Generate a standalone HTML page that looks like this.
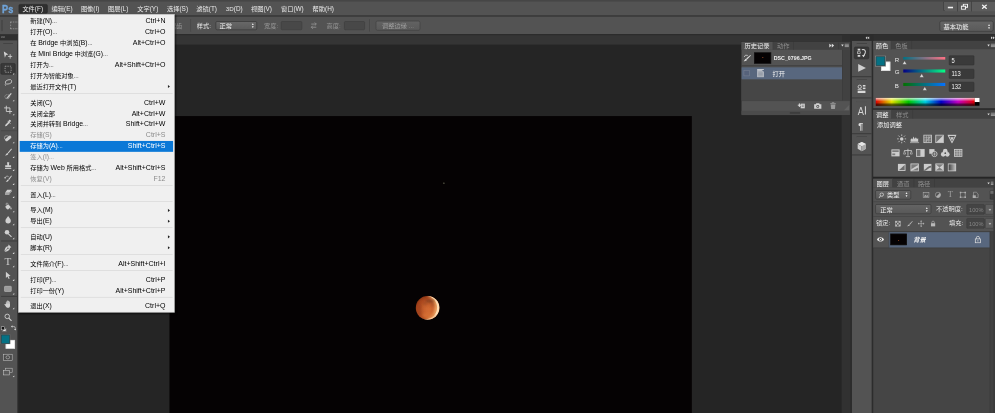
<!DOCTYPE html>
<html lang="zh-CN">
<head>
<meta charset="utf-8">
<title>Photoshop</title>
<style>
html,body{margin:0;padding:0;background:#262626;overflow:hidden}
body{width:995px;height:413px;position:relative}
#app{position:absolute;left:0;top:0;width:1920px;height:797px;transform:scale(0.51823);transform-origin:0 0;
 font-family:"Liberation Sans","Noto Sans CJK SC",sans-serif;font-size:12px;line-height:1;color:#e4e4e4;background:#252525;overflow:hidden}
#app div,#app span,#app svg{position:absolute;box-sizing:border-box;white-space:nowrap}
/* top bars */
#menubar{left:0;top:0;width:1920px;height:30px;background:#535353}
#mbline{left:0;top:30.500px;width:1920px;height:1.800px;background:#3a3a3a}
#topedge{left:0;top:0;width:1920px;height:2.600px;background:#464646}
#optbar{left:0;top:32.300px;width:1920px;height:33.5px;background:#535353}
#tabband{left:0;top:65.5px;width:1920px;height:20.5px;background:#353535;border-top:2px solid #2b2b2b}
.mi{top:12px;font-size:12px;color:#e9e9e9}
.mi small{font-size:12.4px;position:static}
.en{position:static!important;font-size:13.4px}
/* popup menu */
#menu{left:35.3px;top:27.2px;width:302px;height:576px;background:#f0f0f0;border:1px solid #9a9a9a;box-shadow:2px 2px 3px rgba(0,0,0,.55)}
#menu .it{left:2px;width:296px;height:21px;color:#000;font-size:12px}
#menu .it span{top:2.500px;line-height:16px}
#menu .it .l{left:20px}
#menu .it .r{right:15px;font-size:13.5px;top:2.500px}
#menu .it .a{right:6.5px;top:7px;line-height:0;width:0;height:0;border-left:4px solid #222;border-top:3.5px solid transparent;border-bottom:3.5px solid transparent}
#menu .dis{color:#8c8c8c}
#menu .hl{background:#0a78d7;color:#fff}
#menu .sep{left:4px;width:293px;height:1px;background:#cfcfcf}
/* panels */
.panel{background:#535353}
.tabbar{background:#424242;height:17px}
.tab{height:17px;top:0;font-size:12px;padding-top:3px;text-align:center;color:#8f8f8f;border-right:1px solid #383838}
.tab.on{background:#535353;color:#f0f0f0}
.hdr{background:#2f2f2f}
</style>
</head>
<body>
<div id="app">

<!-- workspace + document -->
<div id="doc" style="left:326.5px;top:223.8px;width:1008.5px;height:574px;background:#050203"></div>
<div style="left:854.5px;top:352.0px;width:3px;height:3px;border-radius:50%;background:#4a4a3c;box-shadow:0 0 1.500px #33332a"></div>
<svg id="moon" style="left:794.800px;top:564.100px" width="60" height="60" viewBox="-30 -30 60 60">
<defs>
<radialGradient id="mg" cx="0.55" cy="0.6" r="0.62"><stop offset="0" stop-color="#d46c32"/><stop offset="0.5" stop-color="#c45e2c"/><stop offset="0.8" stop-color="#a8461e"/><stop offset="1" stop-color="#8c3514"/></radialGradient>
<filter id="mb0" x="-20%" y="-20%" width="140%" height="140%"><feGaussianBlur stdDeviation="1"/></filter>
<filter id="mb1" x="-50%" y="-50%" width="200%" height="200%"><feGaussianBlur stdDeviation="1.700"/></filter>
<filter id="mb2" x="-50%" y="-50%" width="200%" height="200%"><feGaussianBlur stdDeviation="2.500"/></filter>
<clipPath id="mc"><circle r="23.200"/></clipPath>
<mask id="mm1"><rect x="-30" y="-30" width="60" height="60" fill="#000"/><circle r="23" fill="#fff"/><circle cx="-4.200" cy="-0.500" r="22.600" fill="#000"/></mask>
<mask id="mm2"><rect x="-30" y="-30" width="60" height="60" fill="#000"/><circle r="23" fill="#fff"/><circle cx="-10" cy="-1" r="23.500" fill="#000"/></mask>
</defs>
<circle r="22.700" fill="url(#mg)" filter="url(#mb0)"/>
<g clip-path="url(#mc)">
<g filter="url(#mb2)" opacity=".9"><rect x="-30" y="-30" width="60" height="60" fill="#f0a464" mask="url(#mm2)"/></g>
<g filter="url(#mb0)" opacity=".95"><rect x="-30" y="-30" width="60" height="60" fill="#ffe4bc" mask="url(#mm1)"/></g>
<ellipse cx="3" cy="15" rx="12" ry="6" fill="#e07c3a" opacity=".5" filter="url(#mb2)"/>
<ellipse cx="5" cy="-13" rx="9" ry="3.500" fill="#6e3a22" opacity=".55" filter="url(#mb1)"/>
<ellipse cx="10" cy="-6" rx="4.500" ry="3" fill="#8a4a2a" opacity=".4" filter="url(#mb1)"/>
<ellipse cx="-5" cy="-8" rx="5" ry="3.500" fill="#8a4020" opacity=".4" filter="url(#mb2)"/>
<ellipse cx="-15" cy="4" rx="5" ry="12" fill="#8c3614" opacity=".4" filter="url(#mb2)"/>
</g>
</svg>

<!-- top bars -->
<div id="menubar"></div>
<div id="mbline"></div>
<div id="topedge"></div>
<div id="optbar"></div>
<div id="tabband"></div>

<!--MENUBAR-->
<div style="left:2px;top:1px;width:34px;height:28px;color:#6fa4da;font-size:21px;font-weight:bold"><span style="left:1.500px;top:6.500px;transform:scaleX(.84);transform-origin:0 0;-webkit-text-stroke:0.700px #6fa4da">Ps</span></div>
<div style="left:35.7px;top:7.7px;width:56.0px;height:18.7px;background:#2f2f2f;border:1px solid #262626;border-radius:3px"></div>
<span class="mi" style="left:43.2px">文件<small>(F)</small></span>
<span class="mi" style="left:99.6px">编辑<small>(E)</small></span>
<span class="mi" style="left:156.1px">图像<small>(I)</small></span>
<span class="mi" style="left:208.4px">图层<small>(L)</small></span>
<span class="mi" style="left:264.9px">文字<small>(Y)</small></span>
<span class="mi" style="left:322.3px">选择<small>(S)</small></span>
<span class="mi" style="left:378.8px">滤镜<small>(T)</small></span>
<span class="mi" style="left:435.7px">3D<small>(D)</small></span>
<span class="mi" style="left:484.3px">视图<small>(V)</small></span>
<span class="mi" style="left:542.2px">窗口<small>(W)</small></span>
<span class="mi" style="left:603.2px">帮助<small>(H)</small></span>
<div style="left:1819.7px;top:2.7px;width:100.3px;height:19.7px;background:#5c5c5c;border:1px solid #303030;border-right:none;border-radius:0 0 0 4px"></div>
<div style="left:1847.1px;top:2.7px;width:1px;height:19.7px;background:#303030"></div>
<div style="left:1874.1px;top:2.7px;width:1px;height:19.7px;background:#303030"></div>
<div style="left:1828.9px;top:12.7px;width:10.0px;height:3.5px;background:#f2f2f2"></div>
<svg style="left:1853.6px;top:6.6px" width="14" height="12" viewBox="0 0 14 12"><rect x="5" y="1" width="8" height="6" fill="none" stroke="#f2f2f2" stroke-width="2"/><rect x="1" y="5" width="8" height="6" fill="#5c5c5c" stroke="#f2f2f2" stroke-width="2"/></svg>
<svg style="left:1893.6px;top:8.1px" width="11" height="10" viewBox="0 0 11 10"><path d="M1 1L10 9M10 1L1 9" stroke="#f2f2f2" stroke-width="2.4"/></svg>
<!--OPTBAR-->
<div style="left:2px;top:38.6px;width:3px;height:21.2px;border-left:1px dotted #2e2e2e;border-right:1px dotted #2e2e2e"></div>
<div style="left:19.7px;top:42.3px;width:17px;height:14px;border:1.5px dashed #bdbdbd"></div>
<span style="left:303.6px;top:43.6px;color:#979797">消除锯齿</span>
<div style="left:367.2px;top:36.7px;width:2px;height:24.1px;background:#3d3d3d;border-right:1px solid #636363"></div>
<span style="left:379.8px;top:43.6px;color:#ededed">样式:</span>
<div style="left:415.8px;top:40.7px;width:79.9px;height:17.8px;background:linear-gradient(#686868,#5a5a5a);border:1px solid #2f2f2f;border-radius:3px"><span style="left:7px;top:2.5px;color:#f2f2f2">正常</span><span style="right:4px;top:3px;font-size:6px;line-height:5.5px;color:#eee;position:absolute">▲<br>▼</span></div>
<span style="left:509.4px;top:43.6px;color:#979797">宽度:</span>
<div style="left:542.2px;top:40.7px;width:40.5px;height:17.8px;background:#484848;border:1px solid #3b3b3b;border-radius:2.500px"></div>
<svg style="left:596.6px;top:41.3px" width="17" height="17" viewBox="0 0 14 14"><path d="M3 4.500h8M8.500 2l2.500 2.500L8.500 7M11 9.500H3M5.500 7L3 9.500 5.500 12" stroke="#8e8e8e" stroke-width="1.500" fill="none"/></svg>
<span style="left:630.0px;top:43.6px;color:#979797">高度:</span>
<div style="left:663.8px;top:40.7px;width:40.5px;height:17.8px;background:#484848;border:1px solid #3b3b3b;border-radius:2.500px"></div>
<div style="left:713.4px;top:36.7px;width:2px;height:24.1px;background:#3d3d3d;border-right:1px solid #636363"></div>
<div style="left:724.8px;top:39.8px;width:86.4px;height:19.3px;background:linear-gradient(#626262,#595959);border:1px solid #3d3d3d;border-radius:3.500px;text-align:center"><span style="left:0;width:100%;top:3px;color:#9e9e9e">调整边缘 ...</span></div>
<div style="left:1812.7px;top:39.9px;width:104.8px;height:21.0px;background:linear-gradient(#666,#5a5a5a);border:1px solid #333;border-radius:4px"><span style="left:7px;top:4px;color:#f4f4f4">基本功能</span><span style="right:5px;top:4.5px;font-size:6px;line-height:6px;color:#eee;position:absolute">▲<br>▼</span></div>
<!--TOOLBAR-->
<div id="toolbar" class="panel" style="left:0;top:66.0px;width:34.3px;height:740px"></div>
<div style="left:34.3px;top:66.0px;width:1.3px;height:740px;background:#2b2b2b"></div>
<div class="hdr" style="left:0;top:66.0px;width:34.3px;height:12.0px"></div>
<svg style="left:1px;top:69.1px" width="9" height="6" viewBox="0 0 9 6"><path d="M1 1l3 3M4 1L1 4M5 1l3 3M8 1L5 4" stroke="#9a9a9a" stroke-width="1"/></svg>
<div style="left:5.8px;top:83.0px;width:19.3px;height:3px;background:#444;border-bottom:1px solid #5e5e5e"></div>
<div style="left:1.4px;top:122.1px;width:28.9px;height:22.4px;background:#383838;border:1px solid #2a2a2a;border-radius:3px"></div>
<div style="left:2px;top:251.8px;width:30.5px;height:1.5px;background:#3f3f3f"></div>
<div style="left:2px;top:464.4px;width:30.5px;height:1.5px;background:#3f3f3f"></div>
<div style="left:2px;top:571.1px;width:30.5px;height:1.5px;background:#3f3f3f"></div>
<svg style="left:6.7px;top:98.0px" width="17.400" height="17.400" viewBox="0 0 20 20"><path d="M0 1l10.500 7.500-5.200 1L2.800 15.500z" fill="#d0d0d0"/><path d="M14.500 7.500v10M9.500 12.500h10" stroke="#d0d0d0" stroke-width="1.900"/></svg>
<svg style="left:6.7px;top:124.6px" width="17.400" height="17.400" viewBox="0 0 20 20"><rect x="3.200" y="3.200" width="13.400" height="13.400" fill="none" stroke="#c8c8c8" stroke-width="1.400" stroke-dasharray="2.900 2.350"/></svg><svg style="left:24.3px;top:140.3px" width="4" height="4" viewBox="0 0 4 4"><path d="M4 0v4H0z" fill="#e0e0e0"/></svg>
<svg style="left:6.7px;top:151.3px" width="17.400" height="17.400" viewBox="0 0 20 20"><ellipse cx="11" cy="8" rx="7.5" ry="4.6" fill="none" stroke="#d0d0d0" stroke-width="1.7" transform="rotate(-18 11 8)"/><path d="M5 11c-2 2-2 4 0 6" stroke="#d0d0d0" stroke-width="1.5" fill="none"/></svg><svg style="left:24.3px;top:166.9px" width="4" height="4" viewBox="0 0 4 4"><path d="M4 0v4H0z" fill="#e0e0e0"/></svg>
<svg style="left:6.7px;top:176.5px" width="17.400" height="17.400" viewBox="0 0 20 20"><ellipse cx="8" cy="11" rx="5.5" ry="4.5" fill="none" stroke="#d0d0d0" stroke-width="1.3" stroke-dasharray="2 1.5"/><path d="M7 13L16 3l2 1.6L9.5 14.5z" fill="#d0d0d0"/><path d="M5.5 15.5l2-3 2 2z" fill="#d0d0d0"/></svg><svg style="left:24.3px;top:192.2px" width="4" height="4" viewBox="0 0 4 4"><path d="M4 0v4H0z" fill="#e0e0e0"/></svg>
<svg style="left:6.7px;top:203.2px" width="17.400" height="17.400" viewBox="0 0 20 20"><path d="M6 1v13h13M1 6h13v13" stroke="#d0d0d0" stroke-width="2" fill="none"/></svg><svg style="left:24.3px;top:218.8px" width="4" height="4" viewBox="0 0 4 4"><path d="M4 0v4H0z" fill="#e0e0e0"/></svg>
<svg style="left:6.7px;top:228.5px" width="17.400" height="17.400" viewBox="0 0 20 20"><path d="M3 17l1-3.5 7-7 2.5 2.5-7 7z" fill="#d0d0d0"/><path d="M10.5 5l2-2c1.6-1.6 4.8 1.6 3.2 3.2l-2 2z" fill="#d0d0d0"/><path d="M9 5l6 6" stroke="#d0d0d0" stroke-width="2"/></svg><svg style="left:24.3px;top:244.1px" width="4" height="4" viewBox="0 0 4 4"><path d="M4 0v4H0z" fill="#e0e0e0"/></svg>
<svg style="left:6.7px;top:257.8px" width="17.400" height="17.400" viewBox="0 0 20 20"><ellipse cx="7" cy="9" rx="5.5" ry="4.5" fill="none" stroke="#d0d0d0" stroke-width="1.2"/><rect x="2.5" y="7.5" width="16" height="6.5" rx="3.2" fill="#d0d0d0" transform="rotate(-40 10 11)"/></svg><svg style="left:24.3px;top:273.4px" width="4" height="4" viewBox="0 0 4 4"><path d="M4 0v4H0z" fill="#e0e0e0"/></svg>
<svg style="left:6.7px;top:285.4px" width="17.400" height="17.400" viewBox="0 0 20 20"><path d="M9 11L17 2l1.4 1.2L11 12.5z" fill="#d0d0d0"/><path d="M8.5 11.5l2.2 2.2c-1.5 3-5 3.8-8 3.3 2.6-1 2.6-4.2 5.8-5.5z" fill="#d0d0d0"/></svg><svg style="left:24.3px;top:301.0px" width="4" height="4" viewBox="0 0 4 4"><path d="M4 0v4H0z" fill="#e0e0e0"/></svg>
<svg style="left:6.7px;top:310.5px" width="17.400" height="17.400" viewBox="0 0 20 20"><path d="M7.5 2.5h5l-.8 6.5h4.8v4.5h-13V9h4.8z" fill="#d0d0d0"/><rect x="3" y="15" width="14" height="2.2" fill="#d0d0d0"/></svg><svg style="left:24.3px;top:326.1px" width="4" height="4" viewBox="0 0 4 4"><path d="M4 0v4H0z" fill="#e0e0e0"/></svg>
<svg style="left:6.7px;top:337.1px" width="17.400" height="17.400" viewBox="0 0 20 20"><path d="M10 10l7-8 1.4 1.2L12 12z" fill="#d0d0d0"/><path d="M9.5 11l2 2c-1.3 2.6-4.4 3.3-7 2.9 2.3-.9 2.3-3.7 5-4.9z" fill="#d0d0d0"/><path d="M3 8a5 5 0 0 1 8-3.5" stroke="#d0d0d0" stroke-width="1.5" fill="none"/><path d="M1 6l2.2 3.2L6 6.5z" fill="#d0d0d0"/></svg><svg style="left:24.3px;top:352.7px" width="4" height="4" viewBox="0 0 4 4"><path d="M4 0v4H0z" fill="#e0e0e0"/></svg>
<svg style="left:6.7px;top:362.4px" width="17.400" height="17.400" viewBox="0 0 20 20"><path d="M8 4.5h10l-5 7H3z" fill="#d0d0d0"/><path d="M3 12.5h10v3.5H3z" fill="#bdbdbd"/><path d="M13 11.5l5-7v3.5l-5 7z" fill="#a9a9a9"/></svg><svg style="left:24.3px;top:378.0px" width="4" height="4" viewBox="0 0 4 4"><path d="M4 0v4H0z" fill="#e0e0e0"/></svg>
<svg style="left:6.7px;top:390.0px" width="17.400" height="17.400" viewBox="0 0 20 20"><path d="M4 9l6-4.5 6 6.5-6 5.5c-3.5-1-6-4-6-7.500z" fill="#d0d0d0"/><path d="M10 4.500c-1.500-4-5.500-3-4 2" stroke="#d0d0d0" stroke-width="1.4" fill="none"/><path d="M16 11c1.200 1.800 2.500 3.500 1.200 5-1.200 1-2.600 0-2.200-1.600z" fill="#d0d0d0"/></svg><svg style="left:24.3px;top:405.6px" width="4" height="4" viewBox="0 0 4 4"><path d="M4 0v4H0z" fill="#e0e0e0"/></svg>
<svg style="left:6.7px;top:415.2px" width="17.400" height="17.400" viewBox="0 0 20 20"><path d="M10 2c2.500 4 6 7 6 10.500a6 6 0 0 1-12 0C4 9 7.500 6 10 2z" fill="#d0d0d0"/></svg><svg style="left:24.3px;top:430.9px" width="4" height="4" viewBox="0 0 4 4"><path d="M4 0v4H0z" fill="#e0e0e0"/></svg>
<svg style="left:6.7px;top:441.9px" width="17.400" height="17.400" viewBox="0 0 20 20"><circle cx="7.500" cy="7" r="5" fill="#d0d0d0"/><path d="M10.500 10.500l7 7" stroke="#d0d0d0" stroke-width="2.400"/></svg><svg style="left:24.3px;top:457.5px" width="4" height="4" viewBox="0 0 4 4"><path d="M4 0v4H0z" fill="#e0e0e0"/></svg>
<svg style="left:6.7px;top:469.9px" width="17.400" height="17.400" viewBox="0 0 20 20"><path d="M11 2l6 6-3 2c0 3.500-2 6-9 8l-2.500-.5L2 15c2-7 4.500-9 8-9z" fill="#d0d0d0"/><circle cx="9.500" cy="10.500" r="1.600" fill="#535353"/><path d="M3 17l6-6" stroke="#535353" stroke-width="1"/></svg><svg style="left:24.3px;top:485.5px" width="4" height="4" viewBox="0 0 4 4"><path d="M4 0v4H0z" fill="#e0e0e0"/></svg>
<span style="left:7.4px;top:493.3px;width:16px;text-align:center;font-family:'Liberation Serif',serif;font-size:21.500px;margin-top:1px;color:#cacaca">T</span><svg style="left:24.3px;top:511.7px" width="4" height="4" viewBox="0 0 4 4"><path d="M4 0v4H0z" fill="#e0e0e0"/></svg>
<svg style="left:6.7px;top:522.7px" width="17.400" height="17.400" viewBox="0 0 20 20"><path d="M5 1.500v14l3.600-3.400 2.600 5.700 2.200-1-2.600-5.500 4.800-.3z" fill="#d0d0d0"/></svg><svg style="left:24.3px;top:538.4px" width="4" height="4" viewBox="0 0 4 4"><path d="M4 0v4H0z" fill="#e0e0e0"/></svg>
<svg style="left:6.7px;top:549.4px" width="17.400" height="17.400" viewBox="0 0 20 20"><rect x="2" y="4" width="15" height="11.500" rx="1" fill="#9c9c9c" stroke="#c4c4c4" stroke-width="1.200"/></svg><svg style="left:24.3px;top:565.0px" width="4" height="4" viewBox="0 0 4 4"><path d="M4 0v4H0z" fill="#e0e0e0"/></svg>
<svg style="left:6.7px;top:577.5px" width="17.400" height="17.400" viewBox="0 0 20 20"><path d="M5 10V5.500c0-1.300 1.800-1.300 1.800 0V9h.6V3.300c0-1.300 1.900-1.300 1.900 0V9h.6V3.800c0-1.300 1.900-1.300 1.900 0V9.500h.6V5.500c0-1.300 1.800-1.300 1.800 0V13c0 3-1.500 5.500-4.500 5.500-3.200 0-4-1.500-5.500-4L2 11.500c-.8-1.300.8-2.300 1.700-1.200z" fill="#d0d0d0"/></svg><svg style="left:24.3px;top:593.2px" width="4" height="4" viewBox="0 0 4 4"><path d="M4 0v4H0z" fill="#e0e0e0"/></svg>
<svg style="left:6.7px;top:603.8px" width="17.400" height="17.400" viewBox="0 0 20 20"><circle cx="8" cy="7.500" r="5" fill="none" stroke="#d0d0d0" stroke-width="2"/><path d="M11.500 11.500l6 6" stroke="#d0d0d0" stroke-width="2.600"/></svg>
<div style="left:5.4px;top:632.9px;width:7px;height:7px;background:#fff;border:1px solid #222"></div><div style="left:1.9px;top:629.5px;width:7px;height:7px;background:#111;border:1px solid #ddd"></div>
<svg style="left:20.5px;top:626.8px" width="10" height="11" viewBox="0 0 10 11"><path d="M2 3h3.500a3 3 0 0 1 3 3v2" stroke="#d0d0d0" stroke-width="1.300" fill="none"/><path d="M0 3l3-2.600v5.200zM8.500 10.800L5.900 7.800h5.200z" fill="#d0d0d0"/></svg>
<div style="left:11.2px;top:656.1px;width:18.3px;height:17.4px;background:#fff;border:1px solid #c9c9c9"></div>
<div style="left:2.3px;top:645.7px;width:16.8px;height:17.4px;background:#057184;border:1px solid #3c3c3c;box-shadow:0 0 0 1px #6b6b6b"></div>
<div style="left:5.8px;top:683.1px;width:17.9px;height:12.7px;border:1.500px solid #cfcfcf;background:#4a4a4a"></div><div style="left:11.2px;top:685.6px;width:7.500px;height:7.500px;border-radius:50%;border:1.500px solid #d9d9d9"></div>
<div style="left:10.0px;top:710.1px;width:13.7px;height:9.3px;border:1.500px solid #c4c4c4;background:#535353"></div><div style="left:5.8px;top:714.0px;width:13.7px;height:9.6px;border:1.500px solid #d0d0d0;background:#5a5a5a"></div>
<svg style="left:24.3px;top:723.6px" width="4" height="4" viewBox="0 0 4 4"><path d="M4 0v4H0z" fill="#e0e0e0"/></svg>
<!--HISTORY-->
<div style="left:1624.4px;top:220.0px;width:17.2px;height:600px;background:#313131"></div>

<div id="hist" class="panel" style="left:1429.7px;top:81.1px;width:211.5px;height:140.8px;border:1px solid #2c2c2c;border-top:none">
<div class="tabbar" style="left:0;top:0;width:209.5px;height:14.8px"></div>
<div class="tab on" style="padding-top:1.900px;left:0;width:60.9px;height:14.8px">历史记录</div>
<div class="tab" style="padding-top:1.900px;left:60.9px;width:40.5px;height:14.8px">动作</div>
<svg style="left:169.8px;top:2.8px" width="10" height="8" viewBox="0 0 10 8"><path d="M0 0l4.500 4L0 8zM5 0l4.500 4L5 8z" fill="#dcdcdc"/></svg>
<div style="left:186.9px;top:0.6px;width:1px;height:12.9px;background:#383838"></div>
<svg style="left:192.1px;top:2.8px" width="16" height="8" viewBox="0 0 16 8"><path d="M0 2h5L2.500 5.500z" fill="#dcdcdc"/><path d="M7 1h8M7 3.500h8M7 6h8" stroke="#cfcfcf" stroke-width="1.200"/></svg>
<div style="left:0;top:71.7px;width:194.6px;height:41.1px;background:#464646"></div>
<div style="left:0;top:45.3px;width:194.6px;height:1.500px;background:#3d3d3d"></div>
<svg style="left:3.4px;top:23.1px" width="16" height="16" viewBox="0 0 16 16"><path d="M6 9l8-7 1 1.200L7.500 11z" fill="#e0e0e0"/><path d="M5.500 9.500l2 2c-1 2.500-4 3-6.500 2.500 2-.8 2-3.400 4.500-4.500z" fill="#e0e0e0"/><path d="M2 6a5 5 0 0 1 7-3" stroke="#e0e0e0" stroke-width="1.400" fill="none"/></svg>
<div style="left:24.6px;top:20.4px;width:32.8px;height:21.8px;background:#050203;border:1px solid #222"><div style="left:14.500px;top:7.6px;width:2px;height:2px;background:#b4542a;border-radius:50%"></div></div>
<span style="left:62.8px;top:24.5px;font-weight:bold;font-size:12px;color:#f0f0f0;transform:scaleX(.85);transform-origin:0 0">DSC_0796.JPG</span>
<div style="left:0;top:48.8px;width:194.6px;height:22.9px;background:#58677e"></div>
<div style="left:4.6px;top:54.0px;width:12.0px;height:12.0px;border:1px solid #7d8796;background:#56627a"></div>
<svg style="left:29.7px;top:52.0px" width="15" height="17" viewBox="0 0 15 17"><path d="M1 2h9l4 3.500V16H1z" fill="#b9bec6"/><path d="M3 6h9M3 8.500h9M3 11h9M3 13.500h9" stroke="#6d7786" stroke-width="1"/><path d="M1 1h13" stroke="#e6e6e6" stroke-width="1.500"/></svg>
<span style="left:59.8px;top:54.7px;color:#f4f4f4">打开</span>
<div style="left:194.6px;top:14.8px;width:14.9px;height:98.6px;background:#414141;border-left:1px solid #383838"></div>
<div style="left:0;top:112.8px;width:209.5px;height:1.500px;background:#3d3d3d"></div>
<svg style="left:108.2px;top:116.3px" width="16" height="14" viewBox="0 0 16 14"><rect x="6" y="3" width="8" height="9" fill="#d0d0d0"/><path d="M0 6h7M3.500 2.500v7" stroke="#e6e6e6" stroke-width="1.800"/><path d="M8 6h4M8 8.500h4" stroke="#535353" stroke-width="1"/></svg>
<svg style="left:139.1px;top:116.9px" width="16" height="13" viewBox="0 0 16 13"><path d="M1 3h3l1.200-2h5.600L12 3h3v9H1z" fill="#d0d0d0"/><circle cx="8" cy="7.500" r="2.800" fill="#535353"/><circle cx="8" cy="7.500" r="1.300" fill="#d0d0d0"/></svg>
<svg style="left:169.9px;top:116.3px" width="13" height="14" viewBox="0 0 13 14"><path d="M1 3h11M4.500 3V1.200h4V3" stroke="#9a9a9a" stroke-width="1.500" fill="none"/><path d="M2 4.500h9l-.8 9H2.800z" fill="#9a9a9a"/></svg>
<svg style="left:197.5px;top:121.1px" width="11" height="11" viewBox="0 0 11 11"><path d="M11 0v11H0z" fill="#626262"/></svg>
<div style="left:0;top:133.1px;width:209.5px;height:7.7px;background:#4b4b4b;border-top:-0.4px solid #3a3a3a"></div>
<div style="left:93.7px;top:136.0px;width:19.3px;height:2px;background:#333"></div>
</div>
<!--STRIP-->
<div style="left:1625.3px;top:66.0px;width:294.7px;height:13.7px;background:#2f2f2f"></div>
<div style="left:1641.2px;top:66.0px;width:43.4px;height:740px;background:#2c2c2c"></div>
<div class="panel" style="left:1643.9px;top:78.7px;width:38.0px;height:740px"></div>
<svg style="left:1669.7px;top:69.9px" width="8" height="6" viewBox="0 0 8 6"><path d="M3.500 0v6L0 3zM7.500 0v6L4 3z" fill="#cfcfcf"/></svg>
<div style="left:1643.9px;top:146.5px;width:38.0px;height:2px;background:#3a3a3a"></div>
<div style="left:1643.9px;top:187.9px;width:38.0px;height:2px;background:#3a3a3a"></div>
<div style="left:1643.9px;top:256.8px;width:38.0px;height:2px;background:#3a3a3a"></div>
<div style="left:1643.9px;top:297.7px;width:38.0px;height:2px;background:#3a3a3a"></div>
<div style="left:1652.7px;top:83.2px;width:20.3px;height:2.500px;background:#444;border-bottom:1px solid #626262"></div>
<div style="left:1652.7px;top:153.2px;width:20.3px;height:2.500px;background:#444;border-bottom:1px solid #626262"></div>
<div style="left:1652.7px;top:194.7px;width:20.3px;height:2.500px;background:#444;border-bottom:1px solid #626262"></div>
<div style="left:1652.7px;top:263.4px;width:20.3px;height:2.500px;background:#444;border-bottom:1px solid #626262"></div>
<div style="left:1648.3px;top:90.1px;width:28.9px;height:23.9px;background:#383838;border:1px solid #2a2a2a;border-radius:3px"></div>
<svg style="left:1651.8px;top:91.1px" width="22" height="22" viewBox="0 0 22 22"><rect x="3" y="3" width="5" height="3.500" fill="#d9d9d9"/><rect x="3" y="9" width="5" height="3.500" fill="none" stroke="#d9d9d9" stroke-width="1.200"/><rect x="3" y="15" width="5" height="3.500" fill="#d9d9d9"/><path d="M11 5c5-2 8 2 6.500 6.500L14 18" stroke="#d9d9d9" stroke-width="2" fill="none"/><path d="M11 15.500l3.500 4 2.500-5z" fill="#d9d9d9"/></svg>
<svg style="left:1651.8px;top:120.2px" width="22" height="22" viewBox="0 0 22 22"><path d="M4 3.500l15 7.500-15 7.500z" fill="#cfcfcf"/></svg>
<svg style="left:1651.8px;top:161.1px" width="22" height="22" viewBox="0 0 22 22"><circle cx="7" cy="6.500" r="3.200" fill="none" stroke="#d9d9d9" stroke-width="1.600"/><rect x="13" y="3" width="5" height="3" fill="#d9d9d9"/><rect x="13" y="8" width="5" height="3" fill="#d9d9d9"/><rect x="3" y="14" width="15" height="4.500" fill="#d9d9d9"/><path d="M3 11.500h8" stroke="#d9d9d9" stroke-width="1.500"/></svg>
<span style="left:1654.9px;top:204.9px;font-size:19.500px;color:#d4d4d4;transform:scaleX(.92);transform-origin:0 0">A</span><div style="left:1669.0px;top:204.5px;width:1.700px;height:16.6px;background:#d4d4d4"></div>
<span style="left:1656.0px;top:234.1px;font-size:17px;font-weight:bold;color:#dedede">¶</span>
<svg style="left:1651.8px;top:272.3px" width="22" height="22" viewBox="0 0 22 22"><path d="M11 2l8 4v9l-8 5-8-5V6z" fill="#cfcfcf"/><path d="M3 6l8 4 8-4M11 10v10" stroke="#535353" stroke-width="1.300" fill="none"/><path d="M11 10l8-4v9l-8 5z" fill="#a8a8a8"/><path d="M11 2l8 4-8 4-8-4z" fill="#e6e6e6"/></svg>
<!--RIGHT-->
<div id="colorp" class="panel" style="left:1684.6px;top:78.7px;width:235.4px;height:130.3px">
<div class="tabbar" style="left:0;top:0;width:235.4px;height:16.8px"></div>
<div class="tab on" style="left:0;width:35.7px;height:16.8px">颜色</div>
<div class="tab" style="left:35.7px;width:39.5px;height:16.8px">色板</div>
<svg style="left:220.5px;top:4.9px" width="16" height="8" viewBox="0 0 16 8"><path d="M0 2h5L2.500 5.500z" fill="#dcdcdc"/><path d="M7 1h8M7 3.500h8M7 6h8" stroke="#cfcfcf" stroke-width="1.200"/></svg>
<div style="left:15.8px;top:40.2px;width:17.9px;height:17.8px;background:#fff;border:1px solid #bbb"></div>
<div style="left:5.2px;top:29.9px;width:18.1px;height:18.1px;background:#057184;border:1.500px solid #383838;box-shadow:0 0 0 1.500px #8a8a8a"></div>
<span style="left:42.1px;top:31.1px;font-size:11.800px;color:#e8e8e8">R</span>
<div style="left:58.6px;top:31.1px;width:80.7px;height:5.6px;background:linear-gradient(90deg,rgb(0,113,132),rgb(255,113,132));"></div>
<svg style="left:56.5px;top:38.2px" width="9" height="8" viewBox="0 0 9 8"><path d="M4.500 0L9 7.500H0z" fill="#d8d8d8" stroke="#3a3a3a" stroke-width=".8"/></svg>
<div style="left:146.1px;top:28.6px;width:49.7px;height:18.9px;background:#3a3a3a;border:1px solid #303030;border-radius:2px"><span style="left:4px;top:3.500px;font-size:12.500px;color:#f2f2f2;transform:scaleX(.9);transform-origin:0 0">5</span></div>
<span style="left:42.1px;top:55.6px;font-size:11.800px;color:#e8e8e8">G</span>
<div style="left:58.6px;top:55.8px;width:80.7px;height:5.6px;background:linear-gradient(90deg,rgb(5,0,132),rgb(5,255,132));"></div>
<svg style="left:89.5px;top:62.9px" width="9" height="8" viewBox="0 0 9 8"><path d="M4.500 0L9 7.500H0z" fill="#d8d8d8" stroke="#3a3a3a" stroke-width=".8"/></svg>
<div style="left:146.1px;top:54.1px;width:49.7px;height:18.9px;background:#3a3a3a;border:1px solid #303030;border-radius:2px"><span style="left:4px;top:3.500px;font-size:12.500px;color:#f2f2f2;transform:scaleX(.9);transform-origin:0 0">113</span></div>
<span style="left:42.1px;top:80.9px;font-size:11.800px;color:#e8e8e8">B</span>
<div style="left:58.6px;top:81.3px;width:80.7px;height:5.6px;background:linear-gradient(90deg,rgb(5,113,0),rgb(5,113,255));"></div>
<svg style="left:95.5px;top:88.4px" width="9" height="8" viewBox="0 0 9 8"><path d="M4.500 0L9 7.500H0z" fill="#d8d8d8" stroke="#3a3a3a" stroke-width=".8"/></svg>
<div style="left:146.1px;top:79.3px;width:49.7px;height:18.9px;background:#3a3a3a;border:1px solid #303030;border-radius:2px"><span style="left:4px;top:3.500px;font-size:12.500px;color:#f2f2f2;transform:scaleX(.9);transform-origin:0 0">132</span></div>
<div style="left:5.8px;top:110.8px;width:191.0px;height:14.5px;background:linear-gradient(180deg,rgba(255,255,255,.75) 0%,rgba(255,255,255,0) 45%,rgba(0,0,0,0) 55%,rgba(0,0,0,.9) 100%),linear-gradient(90deg,#e60000 0%,#e6e600 16%,#00c800 33%,#00d2e6 50%,#0000c8 66%,#c800c8 83%,#e60000 100%)"></div>
<div style="left:196.8px;top:110.8px;width:8.5px;height:7.2px;background:#fff"></div>
<div style="left:196.8px;top:118.0px;width:8.5px;height:7.2px;background:#000"></div>
</div>
<div id="adjp" class="panel" style="left:1684.6px;top:212.3px;width:235.4px;height:128.3px">
<div class="tabbar" style="left:0;top:0;width:235.4px;height:16.9px"></div>
<div class="tab on" style="left:0;width:36.6px;height:16.9px">调整</div>
<div class="tab" style="left:36.6px;width:40.6px;height:16.9px">样式</div>
<svg style="left:220.5px;top:4.8px" width="16" height="8" viewBox="0 0 16 8"><path d="M0 2h5L2.500 5.500z" fill="#dcdcdc"/><path d="M7 1h8M7 3.500h8M7 6h8" stroke="#cfcfcf" stroke-width="1.200"/></svg>
<span style="left:7.7px;top:23.1px;font-size:12px;color:#f0f0f0">添加调整</span>
<svg style="left:46.6px;top:46.5px" width="18" height="18" viewBox="0 0 16 16"><circle cx="8" cy="8" r="3" fill="#cdcdcd"/><path d="M8 0v3M8 13v3M0 8h3M13 8h3M2.300 2.300l2.200 2.200M11.500 11.500l2.200 2.200M13.700 2.300l-2.200 2.200M4.500 11.500l-2.200 2.200" stroke="#cdcdcd" stroke-width="1.400"/></svg>
<svg style="left:71.6px;top:46.5px" width="18" height="18" viewBox="0 0 16 16"><path d="M1 13V9l2-2 1 2 2-5 2 4 2-3 2 3 2-1v6z" fill="#cdcdcd"/><path d="M0 14.500h16" stroke="#cdcdcd" stroke-width="1.200"/></svg>
<svg style="left:96.0px;top:46.5px" width="18" height="18" viewBox="0 0 16 16"><rect x="1.500" y="1.500" width="13" height="13" fill="#6a6a6a" stroke="#cdcdcd" stroke-width="1.400"/><path d="M2 14C7 13 9 8 14 2M6 2v12M10 2v12M2 6h12M2 10h12" stroke="#cdcdcd" stroke-width=".8" fill="none"/></svg>
<svg style="left:119.5px;top:46.5px" width="18" height="18" viewBox="0 0 16 16"><rect x="1.500" y="1.500" width="13" height="13" fill="#707070" stroke="#cdcdcd" stroke-width="1.400"/><path d="M2 14L14 2V14z" fill="#cdcdcd"/></svg>
<svg style="left:143.8px;top:46.5px" width="18" height="18" viewBox="0 0 16 16"><path d="M1.500 2h13L8 14.500z" fill="none" stroke="#cdcdcd" stroke-width="1.800"/><path d="M5 5h6L8 11z" fill="#cdcdcd"/></svg>
<svg style="left:34.6px;top:73.7px" width="18" height="18" viewBox="0 0 16 16"><rect x="1" y="2" width="14" height="12" fill="#cdcdcd"/><rect x="2.500" y="3.500" width="11" height="3" fill="#7c7c7c"/><rect x="2.500" y="9" width="5" height="3" fill="#7c7c7c"/></svg>
<svg style="left:58.5px;top:73.7px" width="18" height="18" viewBox="0 0 16 16"><path d="M8 1v12M2 4h12M4.500 14.500h7" stroke="#cdcdcd" stroke-width="1.400"/><path d="M2 4L0 10h4zM14 4l-2 6h4z" fill="none" stroke="#cdcdcd" stroke-width="1.100"/></svg>
<svg style="left:82.8px;top:73.7px" width="18" height="18" viewBox="0 0 16 16"><rect x="1.500" y="2" width="13" height="12" fill="#707070" stroke="#cdcdcd" stroke-width="1.400"/><rect x="8" y="2" width="6.500" height="12" fill="#cdcdcd"/></svg>
<svg style="left:107.1px;top:73.7px" width="18" height="18" viewBox="0 0 16 16"><rect x="1" y="1.500" width="9" height="8" fill="#cdcdcd"/><circle cx="10" cy="10" r="4.500" fill="#535353" stroke="#cdcdcd" stroke-width="1.500"/><path d="M7 10h6M10 7v6" stroke="#cdcdcd" stroke-width="1"/></svg>
<svg style="left:130.7px;top:73.7px" width="18" height="18" viewBox="0 0 16 16"><circle cx="8" cy="5" r="4" fill="#cdcdcd"/><circle cx="4.500" cy="10.500" r="4" fill="#cdcdcd"/><circle cx="11.500" cy="10.500" r="4" fill="#cdcdcd"/><circle cx="8" cy="8.500" r="1.500" fill="#535353"/></svg>
<svg style="left:155.8px;top:73.7px" width="18" height="18" viewBox="0 0 16 16"><rect x="1.500" y="2" width="13" height="12" fill="#7c7c7c" stroke="#cdcdcd" stroke-width="1.400"/><path d="M1.500 6h13M1.500 10h13M6 2v12M10.500 2v12" stroke="#cdcdcd" stroke-width="1"/></svg>
<svg style="left:46.6px;top:101.3px" width="18" height="18" viewBox="0 0 16 16"><rect x="1.500" y="2" width="13" height="12" fill="#cdcdcd"/><path d="M3 12.500L13 3.500V12.500z" fill="#6c6c6c"/><path d="M4 12L12 4" stroke="#cdcdcd" stroke-width="1"/></svg>
<svg style="left:71.6px;top:101.3px" width="18" height="18" viewBox="0 0 16 16"><rect x="1.500" y="2" width="13" height="12" fill="#7c7c7c" stroke="#cdcdcd" stroke-width="1.400"/><path d="M2 11L14 4v4L2 14z" fill="#cdcdcd"/></svg>
<svg style="left:96.0px;top:101.3px" width="18" height="18" viewBox="0 0 16 16"><rect x="1.500" y="2" width="13" height="12" fill="#cdcdcd"/><path d="M2 12c4-1 4-6 12-7v3c-6 1-6 5-12 6z" fill="#6c6c6c"/></svg>
<svg style="left:119.5px;top:101.3px" width="18" height="18" viewBox="0 0 16 16"><rect x="1.500" y="2" width="13" height="12" fill="#7c7c7c" stroke="#cdcdcd" stroke-width="1.400"/><path d="M2 3l6 5-6 5zM14 3L8 8l6 5z" fill="#cdcdcd"/></svg>
<svg style="left:143.8px;top:101.3px" width="18" height="18" viewBox="0 0 16 16"><defs><linearGradient id="gg"><stop offset="0" stop-color="#3c3c3c"/><stop offset="1" stop-color="#c4c4c4"/></linearGradient></defs><rect x="1.500" y="2" width="13" height="12" fill="url(#gg)" stroke="#cdcdcd" stroke-width="1.400"/></svg>
</div>
<!--LAYERS-->
<div id="layersp" style="left:1684.6px;top:344.8px;width:235.4px;height:454.2px;background:#454545">
<div class="tabbar" style="left:0;top:0;width:235.4px;height:16.8px"></div>
<div class="tab on" style="left:0;width:38.6px;height:16.8px">图层</div>
<div class="tab" style="left:38.6px;width:40.5px;height:16.8px">通道</div>
<div class="tab" style="left:79.1px;width:40.1px;height:16.8px">路径</div>
<svg style="left:220.5px;top:4.9px" width="16" height="8" viewBox="0 0 16 8"><path d="M0 2h5L2.500 5.500z" fill="#dcdcdc"/><path d="M7 1h8M7 3.500h8M7 6h8" stroke="#cfcfcf" stroke-width="1.200"/></svg>
<div class="panel" style="left:0;top:16.8px;width:235.4px;height:84.7px"></div>
<div style="left:0;top:43.8px;width:235.4px;height:1.500px;background:#3f3f3f"></div>
<div style="left:0;top:72.0px;width:235.4px;height:1.500px;background:#3f3f3f"></div>
<div style="left:0;top:100.9px;width:235.4px;height:1.500px;background:#3f3f3f"></div>
<div style="left:4.2px;top:21.8px;width:69.5px;height:18.1px;background:linear-gradient(#646464,#585858);border:1px solid #343434;border-radius:3px"><svg style="left:5px;top:3px" width="11" height="12" viewBox="0 0 11 12"><circle cx="6.500" cy="4.500" r="3.300" fill="none" stroke="#e0e0e0" stroke-width="1.400"/><path d="M4 7L1 11" stroke="#e0e0e0" stroke-width="1.600"/></svg><span style="left:22px;top:3px;color:#f0f0f0">类型</span><span style="right:5px;top:3.500px;font-size:6px;line-height:5.500px;color:#eee;position:absolute">▲<br>▼</span></div>
<svg style="left:95.3px;top:23.9px;opacity:.78" width="14" height="14" viewBox="0 0 16 16"><rect x="1.500" y="2.500" width="13" height="11" fill="#5f5f5f" stroke="#c8c8c8" stroke-width="1.300"/><path d="M3 12l3.500-4 2.500 2.500 2-2L13.500 12z" fill="#c8c8c8"/></svg>
<svg style="left:118.4px;top:23.9px;opacity:.78" width="14" height="14" viewBox="0 0 16 16"><circle cx="8" cy="8" r="5.800" fill="none" stroke="#c8c8c8" stroke-width="1.300"/><path d="M8 2.200a5.800 5.800 0 0 1 0 11.600z" fill="#c8c8c8" transform="rotate(45 8 8)"/></svg>
<span style="left:143.3px;top:22.4px;font-family:'Liberation Serif',serif;font-size:16px;color:#a2a2a2;margin-left:1px;margin-top:1px">T</span>
<svg style="left:166.7px;top:23.9px;opacity:.78" width="14" height="14" viewBox="0 0 16 16"><rect x="3" y="3" width="10" height="10" fill="none" stroke="#c8c8c8" stroke-width="1.200"/><rect x="1" y="1" width="3.500" height="3.500" fill="#c8c8c8"/><rect x="11.500" y="1" width="3.500" height="3.500" fill="#c8c8c8"/><rect x="1" y="11.500" width="3.500" height="3.500" fill="#c8c8c8"/><rect x="11.500" y="11.500" width="3.500" height="3.500" fill="#c8c8c8"/></svg>
<svg style="left:191.7px;top:23.9px;opacity:.78" width="14" height="14" viewBox="0 0 16 16"><path d="M3 2h6l4 4v8H3z" fill="none" stroke="#c8c8c8" stroke-width="1.300"/><rect x="1" y="9" width="7" height="6" fill="#c8c8c8"/></svg>
<div style="left:225.4px;top:22.4px;width:12px;height:17.4px;background:#3e3e3e;border:1px solid #2e2e2e;border-radius:2px"><div style="left:0;top:0;width:10px;height:6px;background:#6c6c6c"></div></div>
<div style="left:4.2px;top:49.6px;width:108.5px;height:18.9px;background:linear-gradient(#646464,#585858);border:1px solid #343434;border-radius:3px"><span style="left:9px;top:3.500px;color:#f0f0f0">正常</span><span style="right:5px;top:4px;font-size:6px;line-height:5.500px;color:#eee;position:absolute">▲<br>▼</span></div>
<span style="left:121.6px;top:53.3px;color:#e8e8e8">不透明度:</span>
<span style="left:146.6px;top:80.3px;color:#e8e8e8">填充:</span>
<div style="left:180.8px;top:49.2px;width:34.9px;height:19.7px;background:#444;border:1px solid #3a3a3a;border-radius:2px"><span style="left:4px;top:4px;color:#868686;font-size:12px;transform:scaleX(.9);transform-origin:0 0">100%</span></div>
<div style="left:216.5px;top:49.2px;width:16.6px;height:19.7px;background:#5e5e5e;border:1px solid #3e3e3e;border-radius:2px"><svg style="left:4.500px;top:8px" width="6.500" height="4" viewBox="0 0 8 5"><path d="M0 0h8L4 5z" fill="#b0b0b0"/></svg></div>
<div style="left:180.8px;top:76.2px;width:34.9px;height:19.7px;background:#444;border:1px solid #3a3a3a;border-radius:2px"><span style="left:4px;top:4px;color:#868686;font-size:12px;transform:scaleX(.9);transform-origin:0 0">100%</span></div>
<div style="left:216.5px;top:76.2px;width:16.6px;height:19.7px;background:#5e5e5e;border:1px solid #3e3e3e;border-radius:2px"><svg style="left:4.500px;top:8px" width="6.500" height="4" viewBox="0 0 8 5"><path d="M0 0h8L4 5z" fill="#b0b0b0"/></svg></div>
<span style="left:5.8px;top:80.3px;color:#e8e8e8">锁定:</span>
<svg style="left:41.7px;top:80.4px;opacity:.88" width="13" height="13" viewBox="0 0 16 16"><rect x="2" y="2" width="12" height="12" fill="none" stroke="#c8c8c8" stroke-width="1.200"/><path d="M2 2h4v4H2zM10 2h4v4h-4zM6 6h4v4H6zM2 10h4v4H2zM10 10h4v4h-4z" fill="#c8c8c8"/></svg>
<svg style="left:64.9px;top:80.4px;opacity:.88" width="13" height="13" viewBox="0 0 16 16"><path d="M7 9l7-7.500 1.200 1L8.500 10.500z" fill="#c8c8c8"/><path d="M6.500 9.500l2 2c-1.200 2.400-4.200 3-6.800 2.600 2-.8 2-3.400 4.800-4.600z" fill="#c8c8c8"/></svg>
<svg style="left:86.1px;top:80.4px;opacity:.88" width="13" height="13" viewBox="0 0 16 16"><path d="M8 1v14M1 8h14" stroke="#c8c8c8" stroke-width="1.300"/><path d="M8 0l2.500 3h-5zM8 16l2.500-3h-5zM0 8l3-2.500v5zM16 8l-3-2.500v5z" fill="#c8c8c8"/></svg>
<svg style="left:109.3px;top:80.4px;opacity:.88" width="13" height="13" viewBox="0 0 16 16"><rect x="3" y="7" width="10" height="7.500" fill="#c8c8c8"/><path d="M5 7V5a3 3 0 0 1 6 0v2" fill="none" stroke="#c8c8c8" stroke-width="1.500"/></svg>
<div class="panel" style="left:0;top:103.5px;width:30.1px;height:29.5px"></div>
<div style="left:30.1px;top:103.5px;width:195.3px;height:29.5px;background:#58677e;border-left:1px solid #3c3c3c"></div>
<div style="left:0;top:133.0px;width:225.4px;height:1.500px;background:#3a3a3a"></div>
<svg style="left:6.1px;top:109.7px" width="16" height="16" viewBox="0 0 16 16"><path d="M1 8c3.500-5.500 10.500-5.500 14 0-3.500 5.500-10.500 5.500-14 0z" fill="#e6e6e6"/><circle cx="8" cy="8" r="2.800" fill="#444"/><circle cx="8" cy="8" r="1.200" fill="#e6e6e6"/></svg>
<div style="left:33.2px;top:106.4px;width:32.4px;height:22.1px;background:#050203;border:1px solid #1a1a1a"><div style="left:14.500px;top:10.500px;width:2px;height:2px;background:#a04a24;border-radius:50%"></div></div>
<span style="left:77.9px;top:111.8px;color:#f4f4f4;font-style:italic;font-weight:bold">背景</span>
<svg style="left:194.4px;top:109.7px" width="16" height="16" viewBox="0 0 16 16"><rect x="3" y="7" width="10" height="7.500" fill="none" stroke="#e0e0e0" stroke-width="1.400"/><path d="M5 7V5a3 3 0 0 1 6 0v2" fill="none" stroke="#e0e0e0" stroke-width="1.400"/><rect x="7.200" y="9.500" width="1.600" height="2.500" fill="#e0e0e0"/></svg>
<div style="left:225.4px;top:101.9px;width:12px;height:600px;background:#414141;border-left:1px solid #383838"></div>
<div style="left:232.7px;top:0;width:4px;height:620px;background:#3a3a3a"></div>
</div>
<svg style="left:1911.7px;top:69.9px" width="8" height="6" viewBox="0 0 8 6"><path d="M0 0v6l3.500-3zM4 0v6l3.500-3z" fill="#cfcfcf"/></svg>
<!--MENU-->
<div id="menu">
<div class="it " style="top:2.4px"><span class="l">新建<span class="en" style="font-size:13px">(N)</span><span class="en" style="font-size:12px;letter-spacing:-0.300px">...</span></span><span class="r">Ctrl+N</span></div>
<div class="it " style="top:23.5px"><span class="l">打开<span class="en" style="font-size:13px">(O)</span><span class="en" style="font-size:12px;letter-spacing:-0.300px">...</span></span><span class="r">Ctrl+O</span></div>
<div class="it " style="top:44.5px"><span class="l">在 <span class="en">Bridge</span> 中浏览<span class="en" style="font-size:13px">(B)</span><span class="en" style="font-size:12px;letter-spacing:-0.300px">...</span></span><span class="r">Alt+Ctrl+O</span></div>
<div class="it " style="top:65.6px"><span class="l">在 <span class="en">Mini Bridge</span> 中浏览<span class="en" style="font-size:13px">(G)</span><span class="en" style="font-size:12px;letter-spacing:-0.300px">...</span></span></div>
<div class="it " style="top:86.6px"><span class="l">打开为<span class="en" style="font-size:12px;letter-spacing:-0.300px">...</span></span><span class="r">Alt+Shift+Ctrl+O</span></div>
<div class="it " style="top:107.7px"><span class="l">打开为智能对象<span class="en" style="font-size:12px;letter-spacing:-0.300px">...</span></span></div>
<div class="it " style="top:128.8px"><span class="l">最近打开文件<span class="en" style="font-size:13px">(T)</span></span><span class="a"></span></div>
<div class="sep" style="top:151.4px"></div>
<div class="it " style="top:159.2px"><span class="l">关闭<span class="en" style="font-size:13px">(C)</span></span><span class="r">Ctrl+W</span></div>
<div class="it " style="top:180.3px"><span class="l">关闭全部</span><span class="r">Alt+Ctrl+W</span></div>
<div class="it " style="top:201.3px"><span class="l">关闭并转到 <span class="en">Bridge</span><span class="en" style="font-size:12px;letter-spacing:-0.300px">...</span></span><span class="r">Shift+Ctrl+W</span></div>
<div class="it dis" style="top:222.4px"><span class="l">存储<span class="en" style="font-size:13px">(S)</span></span><span class="r">Ctrl+S</span></div>
<div class="it hl" style="top:243.5px"><span class="l">存储为<span class="en" style="font-size:13px">(A)</span><span class="en" style="font-size:12px;letter-spacing:-0.300px">...</span></span><span class="r">Shift+Ctrl+S</span></div>
<div class="it dis" style="top:264.5px"><span class="l">签入<span class="en" style="font-size:13px">(I)</span><span class="en" style="font-size:12px;letter-spacing:-0.300px">...</span></span></div>
<div class="it " style="top:285.6px"><span class="l">存储为 <span class="en">Web</span> 所用格式<span class="en" style="font-size:12px;letter-spacing:-0.300px">...</span></span><span class="r">Alt+Shift+Ctrl+S</span></div>
<div class="it dis" style="top:306.6px"><span class="l">恢复<span class="en" style="font-size:13px">(V)</span></span><span class="r">F12</span></div>
<div class="sep" style="top:329.3px"></div>
<div class="it " style="top:337.1px"><span class="l">置入<span class="en" style="font-size:13px">(L)</span><span class="en" style="font-size:12px;letter-spacing:-0.300px">...</span></span></div>
<div class="sep" style="top:359.8px"></div>
<div class="it " style="top:367.6px"><span class="l">导入<span class="en" style="font-size:13px">(M)</span></span><span class="a"></span></div>
<div class="it " style="top:388.6px"><span class="l">导出<span class="en" style="font-size:13px">(E)</span></span><span class="a"></span></div>
<div class="sep" style="top:411.3px"></div>
<div class="it " style="top:419.1px"><span class="l">自动<span class="en" style="font-size:13px">(U)</span></span><span class="a"></span></div>
<div class="it " style="top:440.1px"><span class="l">脚本<span class="en" style="font-size:13px">(R)</span></span><span class="a"></span></div>
<div class="sep" style="top:462.8px"></div>
<div class="it " style="top:470.6px"><span class="l">文件简介<span class="en" style="font-size:13px">(F)</span><span class="en" style="font-size:12px;letter-spacing:-0.300px">...</span></span><span class="r">Alt+Shift+Ctrl+I</span></div>
<div class="sep" style="top:493.3px"></div>
<div class="it " style="top:501.1px"><span class="l">打印<span class="en" style="font-size:13px">(P)</span><span class="en" style="font-size:12px;letter-spacing:-0.300px">...</span></span><span class="r">Ctrl+P</span></div>
<div class="it " style="top:522.1px"><span class="l">打印一份<span class="en" style="font-size:13px">(Y)</span></span><span class="r">Alt+Shift+Ctrl+P</span></div>
<div class="sep" style="top:544.8px"></div>
<div class="it " style="top:552.6px"><span class="l">退出<span class="en" style="font-size:13px">(X)</span></span><span class="r">Ctrl+Q</span></div>
</div>

</div>
</body>
</html>
